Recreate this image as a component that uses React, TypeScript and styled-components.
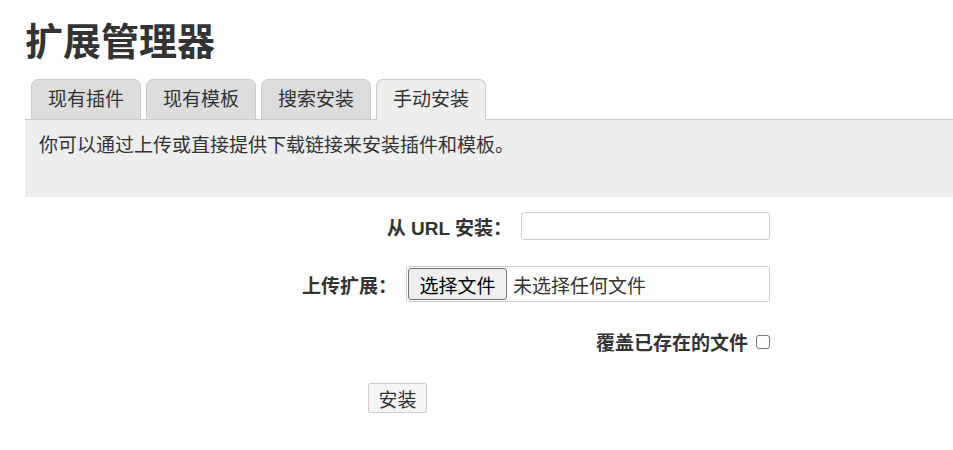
import styled, { createGlobalStyle } from "styled-components";

const GlobalStyle = createGlobalStyle`
  body {
    margin: 0;
    background: #fff;
    color: #333;
    font-family: "Liberation Sans", "Noto Sans CJK SC", sans-serif;
    font-size: 19px;
  }
`;

const tabs = ["现有插件", "现有模板", "搜索安装", "手动安装"];

const App = () => {
  return (
    <Page>
      <GlobalStyle />
      <Title>扩展管理器</Title>

      <TabList>
        {tabs.map((t, i) => (
          <Tab key={t} active={i === 3}>
            {t}
          </Tab>
        ))}
      </TabList>

      <Panel>
        <p>你可以通过上传或直接提供下载链接来安装插件和模板。</p>
      </Panel>

      <Fieldset>
        <Row>
          <Label>从 URL 安装：</Label>
          <TextInput type="text" />
        </Row>
        <Row>
          <Label>上传扩展：</Label>
          <FileBox>
            <FileButton type="button">选择文件</FileButton>
            <FileName>未选择任何文件</FileName>
          </FileBox>
        </Row>
        <Row>
          <Label>覆盖已存在的文件</Label>
          <Check type="checkbox" />
        </Row>
        <SubmitRow>
          <Submit type="button">安装</Submit>
        </SubmitRow>
      </Fieldset>
    </Page>
  );
};

const Page = styled.div`
  padding: 20px 0 0 25px;
`;

const Title = styled.h1`
  margin: 0 0 15px;
  font-size: 38px;
  line-height: 44px;
  font-weight: bold;
  color: #333;
`;

const TabList = styled.div`
  display: flex;
  align-items: flex-end;
  gap: 5px;
  padding-left: 6px;
  margin-bottom: -1px;
`;

const Tab = styled.div<{ active?: boolean }>`
  position: relative;
  z-index: 1;
  box-sizing: border-box;
  height: 41px;
  padding: 0 16px;
  display: flex;
  align-items: center;
  border: 1px solid #ccc;
  border-bottom-color: ${(p) => (p.active ? "#eee" : "#ccc")};
  border-radius: 7px 7px 0 0;
  background: ${(p) => (p.active ? "#eee" : "#ddd")};
  color: #333;
  line-height: 1;
`;

const Panel = styled.div`
  background: #eee;
  border-top: 1px solid #ccc;
  padding: 13px 14px 38px;

  p {
    margin: 0;
    line-height: 26px;
  }
`;

const Fieldset = styled.div`
  width: 745px;
  margin-top: 15px;
  display: flex;
  flex-direction: column;
  align-items: flex-end;
`;

const Row = styled.div`
  display: flex;
  align-items: center;
  justify-content: flex-end;
  gap: 9px;
  margin-bottom: 26px;
`;

const Label = styled.span`
  font-weight: bold;
  color: #333;
`;

const TextInput = styled.input`
  box-sizing: border-box;
  width: 249px;
  height: 28px;
  border: 1px solid #ccc;
  border-radius: 3px;
  background: #fff;
  outline: none;
`;

const FileBox = styled.div`
  box-sizing: border-box;
  width: 364px;
  height: 36px;
  display: flex;
  align-items: center;
  gap: 6px;
  padding: 1px;
  border: 1px solid #ccc;
  border-radius: 3px;
  background: #fff;
`;

const FileButton = styled.button`
  box-sizing: border-box;
  height: 32px;
  width: 99px;
  padding: 0;
  border: 1px solid #767676;
  border-radius: 3px;
  background: #efefef;
  color: #000;
  font: inherit;
`;

const FileName = styled.span`
  color: #333;
`;

const Check = styled.input`
  appearance: none;
  box-sizing: border-box;
  width: 14px;
  height: 14px;
  margin: 0 0 0 -1px;
  border: 1px solid #767676;
  border-radius: 3px;
  background: #fff;
`;

const SubmitRow = styled.div`
  align-self: stretch;
  display: flex;
  justify-content: center;
  margin-top: 2px;
`;

const Submit = styled.button`
  box-sizing: border-box;
  width: 59px;
  height: 30px;
  padding: 0;
  border: 1px solid #ccc;
  border-radius: 2px;
  background: #f4f4f4;
  color: #333;
  font: inherit;
`;

export default App;
